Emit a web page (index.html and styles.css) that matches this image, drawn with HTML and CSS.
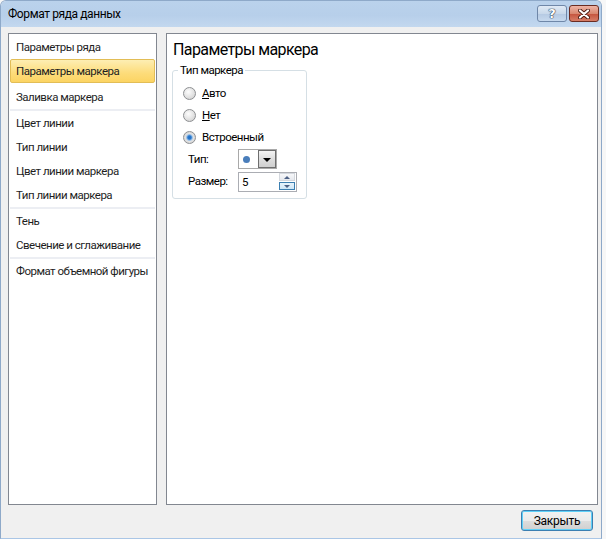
FILE: index.html
```html
<!DOCTYPE html>
<html lang="ru">
<head>
  <meta charset="UTF-8" />
  <title>Формат ряда данных</title>
  <link rel="stylesheet" href="styles.css">
</head>
<body>
  <div class="window">
    <header class="titlebar">
      <span class="title">Формат ряда данных</span>
      <div class="caption-buttons">
        <span class="cap-btn help">?</span>
        <span class="cap-btn close">
          <svg width="12" height="10" viewBox="0 0 12 10">
            <path d="M2 1.5 L10 8.5 M10 1.5 L2 8.5" stroke="#4a1a12" stroke-width="4" stroke-linecap="round"/>
            <path d="M2 1.5 L10 8.5 M10 1.5 L2 8.5" stroke="#fff" stroke-width="2.2" stroke-linecap="round"/>
          </svg>
        </span>
      </div>
    </header>

    <div class="client">
      <div class="panels">
        <!-- Category list -->
        <ul class="nav">
          <li class="nav-item">Параметры ряда</li>
          <li class="nav-item selected">Параметры маркера</li>
          <li class="nav-item">Заливка маркера</li>
          <li class="sep"></li>
          <li class="nav-item">Цвет линии</li>
          <li class="nav-item">Тип линии</li>
          <li class="nav-item">Цвет линии маркера</li>
          <li class="nav-item">Тип линии маркера</li>
          <li class="sep"></li>
          <li class="nav-item">Тень</li>
          <li class="nav-item">Свечение и сглаживание</li>
          <li class="sep"></li>
          <li class="nav-item">Формат объемной фигуры</li>
        </ul>

        <!-- Page -->
        <main class="content">
          <h2>Параметры маркера</h2>
          <fieldset class="groupbox">
            <legend>Тип маркера</legend>
            <div class="row">
              <span class="radio"></span>
              <span><u>А</u>вто</span>
            </div>
            <div class="row">
              <span class="radio"></span>
              <span><u>Н</u>ет</span>
            </div>
            <div class="row">
              <span class="radio checked"></span>
              <span>Встроенный</span>
            </div>
            <div class="row field">
              <span class="field-label">Тип:</span>
              <div class="combo">
                <span class="combo-value"><span class="dot"></span></span>
                <span class="combo-btn"><span class="arrow"></span></span>
              </div>
            </div>
            <div class="row field">
              <span class="field-label">Размер:</span>
              <div class="spin">
                <span class="spin-value">5</span>
                <span class="spin-btns">
                  <span class="spin-up"><span class="tri up"></span></span>
                  <span class="spin-down"><span class="tri down"></span></span>
                </span>
              </div>
            </div>
          </fieldset>
        </main>
      </div>

      <div class="footer">
        <button class="btn">Закрыть</button>
      </div>
    </div>
  </div>
</body>
</html>
```

FILE: styles.css
```css
* {
  box-sizing: border-box;
}

body {
  margin: 0;
  background: #f7f7f7;
  font-family: Roboto, "Noto Sans", sans-serif;
  font-size: 11.5px;
  letter-spacing: -0.5px;
  color: #000;
}

.window {
  width: 602px;
  height: 539px;
  border: 1px solid #8ea9c9;
  border-bottom-color: #aac6e6;
  border-radius: 6px 6px 0 0;
  background: #f0f0f0;
  display: flex;
  flex-direction: column;
}

/* Title bar */
.titlebar {
  height: 26px;
  padding: 0 2px 0 7px;
  display: flex;
  justify-content: space-between;
  align-items: center;
  background: linear-gradient(#bad2ec, #b7cfea 55%, #c3d8ef);
  border-radius: 5px 5px 0 0;
}

.title {
  font-size: 12px;
  letter-spacing: -0.4px;
  color: #000;
}

.caption-buttons {
  display: flex;
  gap: 2px;
  align-self: flex-start;
  margin-top: 4px;
}

.cap-btn {
  width: 30px;
  height: 17px;
  border-radius: 3px;
  display: flex;
  align-items: center;
  justify-content: center;
}

.help {
  border: 1px solid #6f87a8;
  background: linear-gradient(#e0eaf5, #c8d8ea 50%, #b4c9e2 51%, #c7d9ee);
  color: #fff;
  font-weight: bold;
  font-size: 13px;
  letter-spacing: 0;
  font-family: "DejaVu Sans", sans-serif;
  text-shadow: 0 0 1px #1d2f4a, 0 0 1px #1d2f4a, 0 0 1px #1d2f4a;
}

.close {
  border: 1px solid #6a2c22;
  background: linear-gradient(#eeb4a6, #d98870 50%, #c4533d 51%, #d77d66);
}

/* Client area */
.client {
  flex: 1;
  padding: 6px 3px 0 7px;
  display: flex;
  flex-direction: column;
}

.panels {
  display: flex;
  gap: 9px;
  height: 472px;
}

.nav {
  list-style: none;
  margin: 0;
  width: 149px;
  padding: 1px;
  background: #fff;
  border: 1px solid #828790;
}

.nav-item {
  height: 24px;
  line-height: 24px;
  padding-left: 6px;
  white-space: nowrap;
  color: #1e1e1e;
}

.nav-item.selected {
  margin-bottom: 2px;
  padding-left: 5px;
  line-height: 22px;
  border: 1px solid #e2bd56;
  border-radius: 2px;
  background: linear-gradient(#fdeeb3, #fddc7a 60%, #fcd463);
}

.sep {
  height: 2px;
  background: #eceef3;
}

.content {
  width: 432px;
  padding: 6px 6px;
  background: #fff;
  border: 1px solid #828790;
}

.content h2 {
  margin: 0;
  font-size: 16px;
  font-weight: normal;
  letter-spacing: -0.6px;
  line-height: 20px;
}

.groupbox {
  width: 135px;
  margin: 2px 0 0 -1px;
  padding: 4px 6px 6px 10px;
  border: 1px solid #d5dfe5;
  border-radius: 3px;
}

.groupbox legend {
  padding: 0 2px;
  margin-left: -5px;
  line-height: 16px;
}

.row {
  height: 22px;
  display: flex;
  align-items: center;
  gap: 6px;
}

.radio {
  width: 13px;
  height: 13px;
  border-radius: 50%;
  border: 1px solid #8d8f92;
  background: radial-gradient(circle at 40% 35%, #fdfdfd, #e2e2e2 55%, #c9c9c9);
}

.radio.checked {
  background: radial-gradient(circle, #1e6fc8 0, #2b78cc 22%, #8bb8e6 35%, #e2e2e2 50%, #cacaca 100%);
}

.field {
  padding-left: 5px;
  gap: 0;
}

.field-label {
  width: 50px;
}

.combo {
  width: 39px;
  height: 20px;
  border: 1px solid #a9a9a9;
  display: flex;
  background: #fff;
}

.combo-value {
  flex: 1;
  display: flex;
  align-items: center;
  padding-left: 4px;
}

.dot {
  width: 7px;
  height: 7px;
  border-radius: 50%;
  background: #4a7ebb;
}

.combo-btn {
  width: 18px;
  border: 1px solid #6e6e6e;
  background: linear-gradient(#f4f4f4, #dedede 50%, #cfcfcf);
  display: flex;
  align-items: center;
  justify-content: center;
}

.arrow {
  width: 0;
  height: 0;
  border-left: 4px solid transparent;
  border-right: 4px solid transparent;
  border-top: 4px solid #000;
  margin-top: 1px;
}

.spin {
  width: 59px;
  height: 20px;
  margin-top: 1px;
  border: 1px solid #abadb3;
  display: flex;
  align-items: center;
  justify-content: space-between;
  padding: 0 1px 0 3px;
}

.spin-btns {
  width: 16px;
  height: 17px;
  display: flex;
  flex-direction: column;
  gap: 1px;
}

.spin-up,
.spin-down {
  flex: 1;
  display: flex;
  align-items: center;
  justify-content: center;
  border: 1px solid #d4d8de;
  background: linear-gradient(#f7f8fa, #e6e9ee);
}

.spin-down {
  border-color: #3c7fb1;
  background: linear-gradient(#e8f4fc, #cde6f7);
}

.tri {
  width: 0;
  height: 0;
  border-left: 3px solid transparent;
  border-right: 3px solid transparent;
}

.tri.up {
  border-bottom: 3px solid #4d6185;
}

.tri.down {
  border-top: 3px solid #4d6185;
}

/* Footer */
.footer {
  display: flex;
  justify-content: flex-end;
  padding: 5px 5px 0 0;
}

.btn {
  width: 72px;
  height: 21px;
  padding: 0;
  font-family: inherit;
  font-size: 12px;
  letter-spacing: -0.3px;
  color: #000;
  border: 1px solid #3c7fb1;
  border-radius: 3px;
  box-shadow: inset 0 0 0 1px #5fd0f8;
  background: linear-gradient(#f2f2f2, #ebebeb 50%, #dddddd 51%, #cfcfcf);
}
```
